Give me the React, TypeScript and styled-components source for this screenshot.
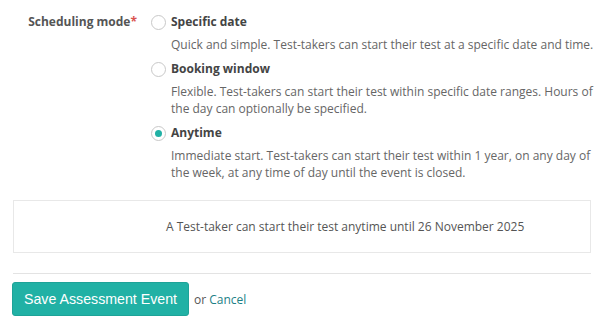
import React, { useState } from 'react'
import styled, { createGlobalStyle } from 'styled-components'

const GlobalStyle = createGlobalStyle`
  body {
    margin: 0;
    background: #ffffff;
    font-family: "Open Sans", "Liberation Sans", sans-serif;
    color: #555;
  }
`

const Page = styled.div`
  width: 600px;
  padding: 12px 9px 0 13px;
  box-sizing: border-box;
`

const FieldRow = styled.div`
  display: grid;
  grid-template-columns: 124px 1fr;
  column-gap: 14px;
  margin-right: -9px;
`

const FieldLabel = styled.div`
  text-align: right;
  font-weight: 700;
  font-size: 12px;
  line-height: 20px;
  color: #555;
`

const Required = styled.span`
  color: #d9534f;
`

const Options = styled.div`
  display: flex;
  flex-direction: column;
  gap: 6px;
`

const Option = styled.label`
  display: grid;
  grid-template-columns: 15px 1fr;
  column-gap: 5px;
  row-gap: 4px;
  cursor: pointer;
`

const Radio = styled.span<{ $checked: boolean }>`
  width: 15px;
  height: 15px;
  box-sizing: border-box;
  border: 1px solid #c8c8c8;
  border-radius: 50%;
  background: #fff;
  align-self: center;
  display: flex;
  align-items: center;
  justify-content: center;
  &::after {
    content: '';
    width: 7px;
    height: 7px;
    border-radius: 50%;
    background: ${(p) => (p.$checked ? '#21b1a5' : 'transparent')};
  }
`

const OptionTitle = styled.div`
  font-weight: 700;
  font-size: 12px;
  line-height: 20px;
  color: #444;
`

const OptionText = styled.div`
  grid-column: 2;
  font-size: 12px;
  line-height: 17px;
  color: #666;
`

const Summary = styled.div`
  margin-top: 19px;
  height: 53px;
  border: 1px solid #e8e8e8;
  box-sizing: border-box;
  display: flex;
  align-items: center;
  padding-left: 152px;
  font-size: 12px;
  color: #555;
`

const Divider = styled.hr`
  border: 0;
  border-top: 1px solid #e3e3e3;
  margin: 20px 0 8px 0;
`

const Actions = styled.div`
  display: flex;
  align-items: center;
  gap: 5px;
  margin-left: -1px;
  font-size: 12px;
  color: #555;
`

const SaveButton = styled.button`
  height: 34px;
  padding: 0 11px;
  background: #21b1a5;
  border: 1px solid #1ea398;
  border-radius: 3px;
  color: #fff;
  font-family: "Liberation Sans", Arial, sans-serif;
  font-size: 14.2px;
  cursor: pointer;
`

const CancelLink = styled.a`
  color: #1c7f86;
  text-decoration: none;
`

const modes = [
  {
    id: 'specific',
    title: 'Specific date',
    text: 'Quick and simple. Test-takers can start their test at a specific date and time.',
  },
  {
    id: 'booking',
    title: 'Booking window',
    text: 'Flexible. Test-takers can start their test within specific date ranges. Hours of the day can optionally be specified.',
  },
  {
    id: 'anytime',
    title: 'Anytime',
    text: 'Immediate start. Test-takers can start their test within 1 year, on any day of the week, at any time of day until the event is closed.',
  },
]

export default function App() {
  const [mode, setMode] = useState('anytime')

  return (
    <Page>
      <GlobalStyle />
      <FieldRow>
        <FieldLabel>
          Scheduling mode<Required>*</Required>
        </FieldLabel>
        <Options>
          {modes.map((m) => (
            <Option key={m.id} onClick={() => setMode(m.id)}>
              <Radio $checked={mode === m.id} />
              <OptionTitle>{m.title}</OptionTitle>
              <OptionText>{m.text}</OptionText>
            </Option>
          ))}
        </Options>
      </FieldRow>
      <Summary>A Test-taker can start their test anytime until 26 November 2025</Summary>
      <Divider />
      <Actions>
        <SaveButton>Save Assessment Event</SaveButton>
        <span>
          or <CancelLink href="#">Cancel</CancelLink>
        </span>
      </Actions>
    </Page>
  )
}
